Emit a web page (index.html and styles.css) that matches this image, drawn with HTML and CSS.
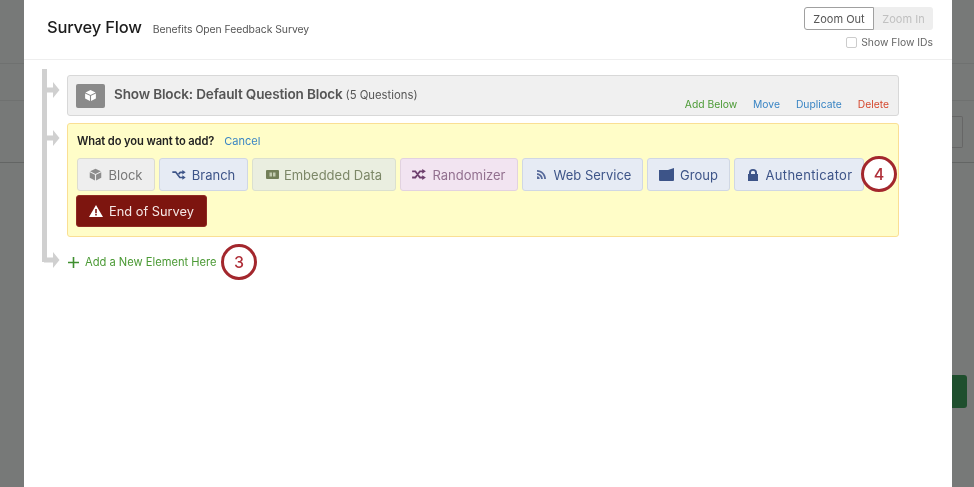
FILE: index.html
```html
<!DOCTYPE html>
<html lang="en">
<head>
<meta charset="utf-8">
<title>Survey Flow</title>
<link rel="stylesheet" href="styles.css">
</head>
<body>
<div class="backdrop">
  <div class="bg-line bg-line-a"></div>
  <div class="bg-line bg-line-b"></div>
  <div class="bg-line bg-line-c"></div>
  <div class="bg-box"></div>
  <div class="bg-save"></div>
</div>
<main class="modal">
  <header class="head">
    <div class="titles">
      <h1 class="title">Survey Flow</h1>
      <span class="subtitle">Benefits Open Feedback Survey</span>
    </div>
    <div class="tools">
      <div class="zoom-group">
        <span class="zoom zoom-out">Zoom Out</span>
        <span class="zoom zoom-in">Zoom In</span>
      </div>
      <label class="flow-ids"><span class="check"></span>Show Flow IDs</label>
    </div>
  </header>
  <section class="flow">
    <div class="rail"></div>
    <svg class="arrow arrow-1" width="17" height="22" viewBox="0 0 17 22"><path d="M0 8.500H9V3L15.500 11L9 19V13.500H0Z"/></svg>
    <svg class="arrow arrow-2" width="17" height="22" viewBox="0 0 17 22"><path d="M0 8.500H9V3L15.500 11L9 19V13.500H0Z"/></svg>
    <svg class="arrow arrow-3" width="17" height="22" viewBox="0 0 17 22"><path d="M0 8.500H9V3L15.500 11L9 19V13.500H0Z"/></svg>

    <article class="block">
      <div class="block-main">
        <span class="block-icon">
          <svg width="13" height="13" viewBox="0 0 14 14"><path fill="#fff" d="M7 1L12.500 3.800L7 6.500L1.500 3.800ZM1.200 4.800L6.400 7.400V13L1.200 10.300ZM12.800 4.800V10.300L7.600 13V7.400Z"/></svg>
        </span>
        <span class="block-name">Show Block: Default Question Block</span>
        <span class="block-count">(5 Questions)</span>
      </div>
      <nav class="block-actions">
        <span class="act-green">Add Below</span>
        <span class="act-blue">Move</span>
        <span class="act-blue">Duplicate</span>
        <span class="act-red">Delete</span>
      </nav>
    </article>

    <article class="adder">
      <div class="adder-q"><strong>What do you want to add?</strong><span class="cancel">Cancel</span></div>
      <div class="options">
        <span class="opt opt-block">
          <svg width="13" height="13" viewBox="0 0 14 14"><path fill="#8c8c8c" d="M7 .8L12.800 3.600L7 6.400L1.200 3.600ZM.8 4.700L6.400 7.400V13.500L.8 10.600ZM13.200 4.700V10.600L7.600 13.500V7.400Z"/></svg>
          Block</span>
        <span class="opt opt-branch">
          <svg width="14" height="10" viewBox="0 0 16 12"><path fill="none" stroke="#3d5488" stroke-width="2" d="M0 2.500H4L9 9H13"/><path fill="none" stroke="#3d5488" stroke-width="2" d="M7.500 5L9.500 2.800H13"/><path fill="#3d5488" d="M12 0L16 2.800L12 5.500ZM12 6.300L16 9L12 11.800Z"/></svg>
          Branch</span>
        <span class="opt opt-data">
          <svg width="13" height="9" viewBox="0 0 13 9"><rect width="13" height="9" rx="1" fill="#737f58"/><path fill="#c3cbb0" d="M3.500 2.500H6V6.500H3.500ZM7 2.500H9.500V6.500H7Z"/></svg>
          Embedded Data</span>
        <span class="opt opt-random">
          <svg width="14" height="11" viewBox="0 0 15 12"><path fill="none" stroke="#6d3f6d" stroke-width="2" d="M0 2.500H3.500L8.500 9.300H12M0 9.300H3.500L8.500 2.500H12"/><path fill="#6d3f6d" d="M11 0L15 2.500L11 5.200ZM11 6.800L15 9.300L11 12Z"/></svg>
          Randomizer</span>
        <span class="opt opt-web">
          <svg width="9" height="9" viewBox="0 0 10 10"><path fill="#56699a" d="M0 0C5.500 0 10 4.500 10 10H8C8 5.600 4.400 2 0 2ZM0 3.500C3.600 3.500 6.500 6.400 6.500 10H4.500C4.500 7.500 2.500 5.500 0 5.500ZM0 7A3 3 0 0 1 3 10H0Z"/></svg>
          Web Service</span>
        <span class="opt opt-group">
          <svg width="15" height="13" viewBox="0 0 15 13"><path fill="#3d5488" d="M0 2H9L15 0V12Q15 13 14 13H1Q0 13 0 12Z"/></svg>
          Group</span>
        <span class="opt opt-auth">
          <svg width="10" height="12" viewBox="0 0 10 12"><path fill="#3d5488" d="M1 5V3.500a4 3.500 0 0 1 8 0V5H10V12H0V5ZM3 5H7V3.500a2 1.800 0 0 0-4 0Z"/></svg>
          Authenticator</span>
        <span class="opt opt-end">
          <svg width="14" height="12" viewBox="0 0 14 12"><path fill="#fff" fill-rule="evenodd" d="M7 0L14 12H0ZM6.200 4V8.200H7.800V4ZM6.200 9V10.500H7.800V9Z"/></svg>
          End of Survey</span>
      </div>
      <span class="badge badge-4">4</span>
    </article>

    <div class="add-new">
      <svg width="11" height="11" viewBox="0 0 11 11"><path fill="#3f8f2f" d="M4.700 0H6.300V4.700H11V6.300H6.300V11H4.700V6.300H0V4.700H4.700Z"/></svg>
      <span>Add a New Element Here</span>
      <span class="badge badge-3">3</span>
    </div>
  </section>
</main>
</body>
</html>
```

FILE: styles.css
```css
* { box-sizing: border-box; }
html, body { margin: 0; height: 100%; }
body {
  width: 974px;
  height: 487px;
  overflow: hidden;
  position: relative;
  background: #777978;
  font-family: Inter, "Liberation Sans", sans-serif;
  color: #333;
  padding-left: 24px;
}
.backdrop { position: absolute; inset: 0; filter: blur(.5px); }
.bg-line { position: absolute; height: 1px; background: #686a69; }
.bg-line-a { left: 0; width: 974px; top: 63px; background: #6f7170; }
.bg-line-b { left: 0; width: 974px; top: 100px; background: #6f7170; }
.bg-line-c { left: 0; width: 974px; top: 162px; background: #636564; }
.bg-box { position: absolute; left: 952px; top: 116px; width: 11px; height: 32px; border: 1px solid #666; border-left: 0; border-radius: 0 2px 2px 0; }
.bg-save { position: absolute; left: 952px; top: 375px; width: 15px; height: 33px; background: #1f4f2e; border-radius: 0 3px 3px 0; }

.modal {
  position: relative;
  width: 928px;
  height: 487px;
  background: #fff;
  filter: blur(.5px);
}
.head {
  height: 60px;
  border-bottom: 1px solid #eee;
  display: flex;
  justify-content: space-between;
  padding: 7px 19px 0 23px;
}
.titles { display: flex; align-items: baseline; gap: 11px; padding-top: 10px; }
.title { margin: 0; font-size: 16.500px; font-weight: 500; color: #1c1c1c; letter-spacing: -.2px; }
.subtitle { font-size: 10.400px; color: #555; letter-spacing: -.05px; }
.tools { display: flex; flex-direction: column; align-items: flex-end; gap: 5px; }
.zoom-group { display: flex; height: 24px; }
.zoom { display: flex; align-items: center; justify-content: center; font-size: 11px; height: 23px; }
.zoom-out { width: 70px; border: 1px solid #a0a0a0; border-radius: 3px 0 0 3px; color: #555; }
.zoom-in { width: 59px; background: #eee; border-radius: 0 3px 3px 0; color: #c0c0c0; }
.flow-ids { display: flex; align-items: center; gap: 4px; font-size: 10.350px; color: #666; }
.check { width: 11px; height: 11px; border: 1px solid #ccc; border-radius: 2px; }

.flow { position: relative; padding: 15px 53px 0 43px; }
.rail { position: absolute; left: 18px; top: 9px; width: 5px; height: 193px; background: #d0d0d0; }
.arrow { position: absolute; left: 20px; fill: #d0d0d0; }
.arrow-1 { top: 19px; }
.arrow-2 { top: 67px; }
.arrow-3 { top: 189px; }

.block {
  height: 41px;
  background: #f0f0f0;
  border: 1px solid #d8d8d8;
  border-radius: 3px;
  display: flex;
  justify-content: space-between;
  padding: 0 9px 0 8px;
}
.block-main { display: flex; align-items: center; padding-bottom: 3px; }
.block-icon { width: 29px; height: 24px; border-radius: 2px; background: #8a8a8a; display: flex; align-items: center; justify-content: center; margin: 3px 9px 0 0; }
.block-name { font-size: 13.550px; font-weight: 600; color: #555; letter-spacing: -.15px; }
.block-count { font-size: 11.300px; color: #555; margin-left: 3px; padding-top: 1px; }
.block-actions { display: flex; align-items: flex-end; gap: 16px; font-size: 10.300px; padding-bottom: 5.500px; }
.act-green { color: #4b9a35; }
.act-blue { color: #3a85c4; }
.act-red { color: #d5492f; }

.adder {
  position: relative;
  margin-top: 7px;
  height: 114px;
  background: #fffdc8;
  border: 1px solid #fadf94;
  border-radius: 3px;
  padding: 10px 8px 0 9px;
}
.adder-q { display: flex; align-items: center; gap: 10px; font-size: 11.150px; height: 13px; }
.adder-q strong { font-weight: 600; color: #222; letter-spacing: -.1px; }
.cancel { color: #3a85c4; font-size: 11px; }
.options { display: flex; flex-wrap: wrap; gap: 4px; margin-top: 11px; width: 800px; }
.opt {
  height: 33px;
  display: flex;
  align-items: center;
  justify-content: center;
  gap: 6px;
  border-radius: 3px;
  border: 1px solid;
  font-size: 13px;
}
.opt-block { width: 78px; background: #eeeeee; border-color: #dcdcd0; color: #777; }
.opt-branch { width: 89px; background: #e6ebf4; border-color: #d0d7e4; color: #3d5488; }
.opt-data { width: 144px; background: #eaeee0; border-color: #dbe0cf; color: #7c8767; gap: 5px; }
.opt-random { width: 118px; background: #f2e4f1; border-color: #e2d2e0; color: #92708f; }
.opt-web { width: 121px; background: #e6ebf4; border-color: #d0d7e4; color: #3d5488; gap: 8px; padding-left: 3px; }
.opt-group { width: 83px; background: #e6ebf4; border-color: #d0d7e4; color: #3d5488; }
.opt-auth { width: 130px; background: #e6ebf4; border-color: #d0d7e4; color: #3d5488; gap: 8px; letter-spacing: .3px; padding-left: 2px; }
.opt-end { width: 131px; margin-left: -1px; height: 32px; background: #7d150f; border-color: #8f2a22; color: #f5e8e6; font-size: 12.800px; }

.add-new { position: relative; display: flex; align-items: center; gap: 6px; margin-top: 18px; height: 14px; padding-left: 1px; font-size: 11.150px; color: #4b9a35; }
.badge {
  position: absolute;
  width: 36px;
  height: 36px;
  border: 3px solid #a3272d;
  border-radius: 50%;
  background: #fff;
  color: #b0303a;
  display: flex;
  align-items: center;
  justify-content: center;
  font-size: 16px;
  font-weight: 500;
}
.badge-4 { left: 793px; top: 32px; }
.badge-3 { left: 154px; top: -11px; }
```
